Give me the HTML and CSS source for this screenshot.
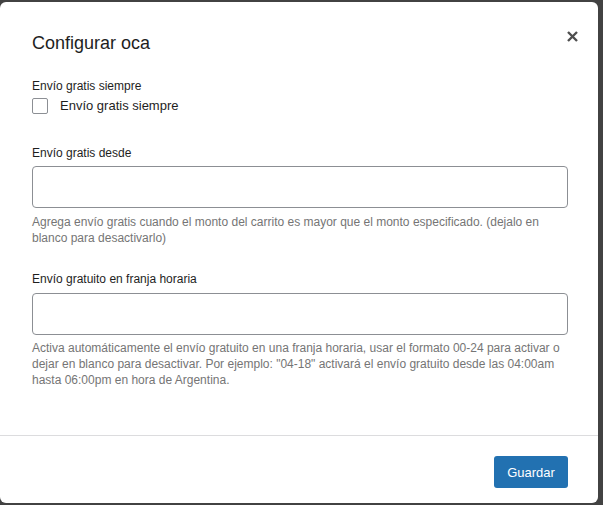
FILE: index.html
```html
<!DOCTYPE html>
<html lang="es">
<head>
<meta charset="utf-8">
<title>Configurar oca</title>
<link rel="stylesheet" href="styles.css">
</head>
<body>
<div class="modal">
  <div class="modal-header">
    <h1 class="modal-title">Configurar oca</h1>
    <button class="close" type="button" aria-label="Cerrar">
      <svg width="11" height="11" viewBox="0 0 11 11"><path d="M1 1 L10 10 M10 1 L1 10" stroke="#4f4f4f" stroke-width="2.4" stroke-linecap="butt"/></svg>
    </button>
  </div>
  <div class="modal-body">
    <div class="field field-first">
      <div class="label">Envío gratis siempre</div>
      <label class="check-row"><span class="checkbox"></span><span class="check-text">Envío gratis siempre</span></label>
    </div>
    <div class="field field-second">
      <div class="label">Envío gratis desde</div>
      <div class="input"></div>
      <p class="help">Agrega envío gratis cuando el monto del carrito es mayor que el monto especificado. (dejalo en blanco para desactivarlo)</p>
    </div>
    <div class="field field-third">
      <div class="label">Envío gratuito en franja horaria</div>
      <div class="input"></div>
      <p class="help">Activa automáticamente el envío gratuito en una franja horaria, usar el formato 00-24 para activar o dejar en blanco para desactivar. Por ejemplo: "04-18" activará el envío gratuito desde las 04:00am hasta 06:00pm en hora de Argentina.</p>
    </div>
  </div>
  <div class="modal-footer">
    <button class="btn-primary" type="button">Guardar</button>
  </div>
</div>
</body>
</html>
```
FILE: styles.css
```css
html, body {
  margin: 0;
  padding: 0;
  height: 100%;
}
body {
  background: #424242;
  font-family: "Liberation Sans", Arial, sans-serif;
  color: #1e1e1e;
  overflow: hidden;
}
.modal {
  position: relative;
  box-sizing: border-box;
  width: 598px;
  height: 501px;
  margin-top: 2px;
  background: #fff;
  border-radius: 6px;
  display: flex;
  flex-direction: column;
}
.modal-header {
  padding: 30px 30px 0 32px;
}
.modal-title {
  margin: 0;
  font-size: 18px;
  line-height: 22px;
  font-weight: 400;
  color: #1e1e1e;
}
.close {
  position: absolute;
  top: 27px;
  right: 18px;
  box-sizing: border-box;
  width: 15px;
  height: 15px;
  padding: 2px;
  border: 0;
  background: transparent;
  display: flex;
  align-items: center;
  justify-content: center;
}
.modal-body {
  flex: 1;
  padding: 0 30px 0 32px;
}
.label {
  font-size: 12px;
  line-height: 16px;
  color: #1e1e1e;
}
.field-first {
  margin-top: 24px;
}
.field-second {
  margin-top: 31px;
}
.field-third {
  margin-top: 25px;
}
.check-row {
  display: flex;
  align-items: center;
  margin-top: 4px;
  height: 16px;
}
.checkbox {
  box-sizing: border-box;
  width: 16px;
  height: 16px;
  border: 1px solid #8c8f94;
  border-radius: 2px;
  background: #fff;
}
.check-text {
  margin-left: 12px;
  font-size: 13px;
  line-height: 16px;
  color: #1e1e1e;
}
.input {
  box-sizing: border-box;
  height: 42px;
  margin-top: 5px;
  border: 1px solid #8c8f94;
  border-radius: 4px;
  background: #fff;
}
.field-third .input {
  margin-top: 6px;
}
.help {
  margin: 6px 0 0;
  font-size: 12px;
  line-height: 16px;
  color: #757575;
}
.field-third .help {
  margin-top: 5px;
}
.modal-footer {
  border-top: 1px solid #dcdcde;
  padding: 20px 30px 15px 32px;
  display: flex;
  justify-content: flex-end;
}
.btn-primary {
  width: 74px;
  height: 32px;
  border: 0;
  border-radius: 3px;
  background: #2271b1;
  color: #fff;
  font-family: "Liberation Sans", Arial, sans-serif;
  font-size: 13px;
  padding: 0;
}
```
